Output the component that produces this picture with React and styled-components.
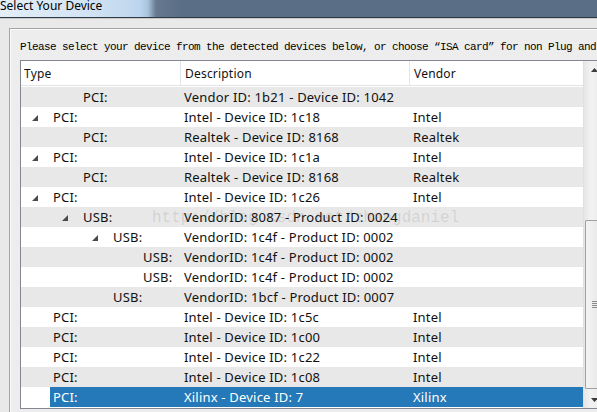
import styled, { createGlobalStyle } from "styled-components";

const rows = [
  { level: 1, type: "PCI:", desc: "Vendor ID: 1b21 - Device ID: 1042", vendor: "" },
  { level: 0, open: true, type: "PCI:", desc: "Intel - Device ID: 1c18", vendor: "Intel" },
  { level: 1, type: "PCI:", desc: "Realtek - Device ID: 8168", vendor: "Realtek" },
  { level: 0, open: true, type: "PCI:", desc: "Intel - Device ID: 1c1a", vendor: "Intel" },
  { level: 1, type: "PCI:", desc: "Realtek - Device ID: 8168", vendor: "Realtek" },
  { level: 0, open: true, type: "PCI:", desc: "Intel - Device ID: 1c26", vendor: "Intel" },
  { level: 1, open: true, type: "USB:", desc: "VendorID: 8087 - Product ID: 0024", vendor: "" },
  { level: 2, open: true, type: "USB:", desc: "VendorID: 1c4f - Product ID: 0002", vendor: "" },
  { level: 3, type: "USB:", desc: "VendorID: 1c4f - Product ID: 0002", vendor: "" },
  { level: 3, type: "USB:", desc: "VendorID: 1c4f - Product ID: 0002", vendor: "" },
  { level: 2, type: "USB:", desc: "VendorID: 1bcf - Product ID: 0007", vendor: "" },
  { level: 0, type: "PCI:", desc: "Intel - Device ID: 1c5c", vendor: "Intel" },
  { level: 0, type: "PCI:", desc: "Intel - Device ID: 1c00", vendor: "Intel" },
  { level: 0, type: "PCI:", desc: "Intel - Device ID: 1c22", vendor: "Intel" },
  { level: 0, type: "PCI:", desc: "Intel - Device ID: 1c08", vendor: "Intel" },
  { level: 0, type: "PCI:", desc: "Xilinx - Device ID: 7", vendor: "Xilinx", selected: true },
];

function Expander() {
  return (
    <svg width="6" height="6" viewBox="0 0 6 6">
      <polygon points="6,0 6,6 0,6" fill="#4a4a4a" />
    </svg>
  );
}

export default function App() {
  return (
    <Janela>
      <Global />
      <Titulo>Select Your Device</Titulo>
      <Corpo>
        <Grupo>
          <Aviso>
            Please select your device from the detected devices below, or choose “ISA card” for non Plug and
          </Aviso>
          <Lista>
            <Tabela>
              <Cabecalho>
                <Coluna>Type</Coluna>
                <Coluna $sep>Description</Coluna>
                <Coluna $sep>Vendor</Coluna>
              </Cabecalho>
              <Marca>http://blog.csdn.net/zhangdaniel</Marca>
              {rows.map((r, i) => (
                <Linha key={i} $cinza={i % 2 === 0}>
                  <Tipo>
                    <Recuo style={{ width: 29 + 30 * r.level }}>
                      {r.open && <Expander />}
                    </Recuo>
                    <Rotulo $sel={r.selected}>{r.type}</Rotulo>
                  </Tipo>
                  <Celula $sel={r.selected}>{r.desc}</Celula>
                  <Celula $sel={r.selected}>{r.vendor}</Celula>
                </Linha>
              ))}
            </Tabela>
            <Rolagem>
              <Seta>
                <svg width="7" height="4" viewBox="0 0 7 4">
                  <polygon points="3.5,0 7,4 0,4" fill="#3c3c3c" />
                </svg>
              </Seta>
              <Trilho>
                <Polegar>
                  <Grip />
                </Polegar>
              </Trilho>
              <Seta>
                <svg width="7" height="4" viewBox="0 0 7 4">
                  <polygon points="0,0 7,0 3.5,4" fill="#3c3c3c" />
                </svg>
              </Seta>
            </Rolagem>
          </Lista>
        </Grupo>
      </Corpo>
    </Janela>
  );
}

const Global = createGlobalStyle`
html, body {
  margin: 0;
  padding: 0;
  width: 597px;
  height: 412px;
  overflow: hidden;
  background: #ececec;
}
`;

const Janela = styled.div`
width: 597px;
height: 412px;
display: flex;
flex-direction: column;
font-family: "Noto Sans", "Open Sans", sans-serif;
overflow: hidden;
`;

const Titulo = styled.div`
height: 18px;
flex: none;
box-sizing: border-box;
border-bottom: 1px solid #2f3a47;
font-size: 12px;
line-height: 12px;
color: #000;
white-space: nowrap;
background: linear-gradient(
  to right,
  #e3eef8 0px,
  #d2e3f3 90px,
  #bcd5ee 140px,
  #a8c2dd 148px,
  #66798f 156px,
  #5a6e85 180px,
  #5a6e86 100%
);
`;

const Corpo = styled.div`
flex: 1;
display: flex;
background: #e9e9e9;
padding: 9px 0 0 9px;
min-height: 0;
border-top: 1px solid #c9c9c9;
`;

const Grupo = styled.div`
flex: 1;
display: flex;
flex-direction: column;
min-width: 0;
min-height: 0;
border-left: 1px solid #a5a5a5;
border-top: 1px solid #a5a5a5;
box-shadow: inset 1px 1px 0 #fafafa;
background: #ededed;
padding: 11px 0 0 10px;
`;

const Aviso = styled.div`
font-family: "Liberation Mono", monospace;
font-size: 11px;
letter-spacing: -0.6px;
line-height: 14px;
height: 14px;
white-space: nowrap;
overflow: hidden;
color: #000;
margin-bottom: 6px;
`;

const Lista = styled.div`
flex: 1;
display: flex;
min-height: 0;
border: 1px solid #828790;
border-right: none;
background: #fff;
margin-bottom: 3px;
`;

const Tabela = styled.div`
position: relative;
width: 562px;
flex: none;
display: flex;
flex-direction: column;
overflow: hidden;
`;

const Cabecalho = styled.div`
display: grid;
grid-template-columns: 159px 229px 1fr;
height: 24px;
border-bottom: 1px solid #e3e3e3;
background: #fff;
font-size: 12px;
letter-spacing: 0.2px;
color: #111;
margin-bottom: 1px;
`;

const Coluna = styled.div`
display: flex;
align-items: center;
padding-left: ${(p) => (p.$sep ? "4px" : "3px")};
border-left: ${(p) => (p.$sep ? "1px solid #e2e5ea" : "none")};
`;

const Linha = styled.div`
display: grid;
grid-template-columns: 159px 229px 1fr;
height: 20px;
font-size: 13px;
letter-spacing: 0.2px;
line-height: 20px;
color: #111;
background: ${(p) => (p.$cinza ? "#e8e8e8" : "#fff")};
`;

const Tipo = styled.div`
display: flex;
min-width: 0;
`;

const Recuo = styled.div`
flex: none;
display: flex;
justify-content: flex-end;
align-items: center;
padding-right: 12px;
box-sizing: border-box;
svg {
  margin-top: 1px;
}
`;

const Rotulo = styled.div`
flex: 1;
padding-left: 3px;
white-space: nowrap;
background: ${(p) => (p.$sel ? "#2579b8" : "transparent")};
color: ${(p) => (p.$sel ? "#fff" : "inherit")};
`;

const Celula = styled.div`
padding-left: 4px;
white-space: nowrap;
overflow: hidden;
background: ${(p) => (p.$sel ? "#2579b8" : "transparent")};
color: ${(p) => (p.$sel ? "#fff" : "inherit")};
`;

const Marca = styled.div`
position: absolute;
left: 131px;
top: 148px;
font-family: "Liberation Mono", monospace;
font-size: 16px;
line-height: 18px;
color: rgba(90, 90, 90, 0.16);
white-space: nowrap;
pointer-events: none;
`;

const Rolagem = styled.div`
width: 17px;
flex: none;
display: flex;
flex-direction: column;
background: linear-gradient(to right, #e6e6e6, #f2f2f2 40%, #ebebeb);
border-left: 1px solid #e0e0e0;
`;

const Seta = styled.div`
height: 17px;
flex: none;
display: flex;
align-items: center;
justify-content: center;
padding-left: 4px;
`;

const Trilho = styled.div`
flex: 1;
display: flex;
flex-direction: column;
justify-content: flex-end;
padding-bottom: 2px;
`;

const Polegar = styled.div`
height: 167px;
margin-left: 1px;
border: 1px solid #a0a0a0;
border-right: none;
border-radius: 2px 0 0 2px;
background: linear-gradient(to right, #f4f4f4, #e6e6e6);
display: flex;
align-items: center;
justify-content: center;
`;

const Grip = styled.div`
width: 7px;
height: 7px;
margin-left: 4px;
background: repeating-linear-gradient(
  to bottom,
  #8a8a8a 0px,
  #8a8a8a 1px,
  transparent 1px,
  transparent 2px
);
`;
